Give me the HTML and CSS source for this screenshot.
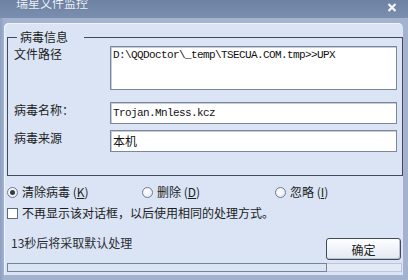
FILE: index.html
```html
<!DOCTYPE html>
<html lang="zh-CN">
<head>
    <meta charset="UTF-8">
    <title>瑞星文件监控</title>
    <link rel="stylesheet" href="styles.css">
</head>
<body>
    <div class="window">
        <div class="titlebar">
            <span class="title">瑞星文件监控</span>
            <span class="close">
                <svg width="10" height="9" viewBox="0 0 10 9">
                    <path d="M1.5 1 L8.5 8 M8.5 1 L1.5 8" stroke="#f4f6fa" stroke-width="2.2" fill="none"/>
                </svg>
            </span>
        </div>
        <div class="frame">
            <div class="panel">
                <fieldset class="info">
                    <legend>病毒信息</legend>
                    <div class="info-grid">
                        <label>文件路径</label>
                        <textarea class="field path" readonly>D:\QQDoctor\_temp\TSECUA.COM.tmp&gt;&gt;UPX</textarea>
                        <label class="row-name">病毒名称：</label>
                        <input class="field row-name" type="text" value="Trojan.Mnless.kcz" readonly>
                        <label class="row-src">病毒来源</label>
                        <input class="field row-src cjk" type="text" value="本机" readonly>
                    </div>
                </fieldset>

                <div class="actions">
                    <div class="radio-item"><span class="radio checked"></span>清除病毒 (<u>K</u>)</div>
                    <div class="radio-item"><span class="radio"></span>删除 (<u>D</u>)</div>
                    <div class="radio-item"><span class="radio"></span>忽略 (<u>I</u>)</div>
                </div>

                <div class="check-row"><span class="checkbox"></span>不再显示该对话框，以后使用相同的处理方式。</div>

                <div class="footer">
                    <span class="countdown">13秒后将采取默认处理</span>
                    <button class="ok-btn">确定</button>
                </div>

                <div class="progress">
                    <div class="progress-fill" style="width: 81.3%"></div>
                </div>
            </div>
        </div>
    </div>
</body>
</html>
```

FILE: styles.css
```css
body {
    margin: 0;
    padding: 0;
    font-family: "Noto Sans CJK SC", sans-serif;
    font-size: 12px;
    color: #1b1d22;
}

.window {
    width: 408px;
    height: 280px;
    overflow: hidden;
    background: #9eafcc;
}

/* Title bar */
.titlebar {
    height: 18px;
    display: flex;
    justify-content: space-between;
    align-items: flex-start;
    background: linear-gradient(to bottom, #6d82a4, #7b8eae);
    overflow: hidden;
}

.title {
    margin: -4px 0 0 16px;
    line-height: 14px;
    color: #eef2f8;
    text-shadow: 0 0 1px #5a6d8e;
}

.close {
    margin: 3px 11px 0 0;
    line-height: 0;
}

/* Window body */
.frame {
    padding: 5px 5px 5px 4px;
    background: linear-gradient(to right, #8c9ec2, #a3b3cf 4px, #a3b3cf);
}

.panel {
    height: 252px;
    box-sizing: border-box;
    padding: 7px 0 0 3px;
    background: #dae4f5;
    border-radius: 5px 5px 0 0;
    box-shadow: inset 1px 1px 0 #eef3fb;
}

.info {
    margin: 0;
    padding: 2px 5px 23px 6px;
    border: 1px solid #3f4b5d;
}

.info legend {
    margin-left: 3px;
    padding: 0 16px 0 3px;
    line-height: 14px;
}

.info-grid {
    display: grid;
    grid-template-columns: 96px 287px;
    align-items: start;
}

.info-grid label {
    line-height: 14px;
    padding-top: 1px;
}

.field {
    box-sizing: border-box;
    margin: 0;
    padding: 2px 2px;
    border: 1px solid #7d8798;
    box-shadow: inset 1px 1px 0 #c4ccd8;
    background: #fff;
    font-family: "Liberation Mono", monospace;
    font-size: 11px;
    letter-spacing: -0.6px;
    line-height: 13px;
    color: #111;
    outline: none;
}

.path {
    height: 44px;
    resize: none;
    overflow: hidden;
}

input.field {
    height: 22px;
    padding-top: 1px;
}

.cjk {
    font-family: "Noto Sans CJK SC", sans-serif;
    font-size: 12px;
    letter-spacing: 0;
}

.row-name {
    margin-top: 12px;
}

.row-src {
    margin-top: 6px;
}

/* Options */
.actions {
    display: grid;
    grid-template-columns: 135px 133px auto;
    margin-top: 9px;
    line-height: 14px;
}

.radio-item {
    display: flex;
    align-items: center;
}

.radio-item u {
    text-decoration: underline;
}

.radio {
    width: 11px;
    height: 11px;
    box-sizing: border-box;
    margin-right: 4px;
    border: 1px solid #6f7c92;
    border-radius: 50%;
    background: radial-gradient(circle at 40% 40%, #ffffff, #dfe5ee);
    display: flex;
    align-items: center;
    justify-content: center;
}

.radio.checked::after {
    content: "";
    width: 5px;
    height: 5px;
    border-radius: 50%;
    background: #363b45;
}

.check-row {
    display: flex;
    align-items: center;
    margin-top: 7px;
    line-height: 14px;
}

.checkbox {
    width: 11px;
    height: 11px;
    box-sizing: border-box;
    margin-right: 4px;
    border: 1px solid #5d6a80;
    background: #fff;
}

/* Footer */
.footer {
    display: flex;
    justify-content: space-between;
    align-items: flex-start;
    margin-top: 16px;
}

.countdown {
    margin-left: 4px;
    line-height: 14px;
    color: #2a2d33;
}

.ok-btn {
    width: 75px;
    height: 22px;
    margin: 2px 2px 0 0;
    padding: 0;
    border: 1px solid #404a59;
    border-radius: 3px;
    background: linear-gradient(to bottom, #fdfeff, #e3e9f2);
    box-shadow: inset -1px -1px 0 #b9c3d2;
    font-family: "Noto Sans CJK SC", sans-serif;
    font-size: 12px;
    color: #1b1d22;
}

.progress {
    height: 9px;
    margin: 3px 1px 0 0;
    background: #e3eaf6;
    border: 1px solid #bcc8da;
    box-sizing: border-box;
}

.progress-fill {
    height: 100%;
    box-sizing: border-box;
    margin: -1px 0 0 -1px;
    height: 9px;
    border: 1px solid #76849a;
    background: #dbe4f3;
}
```
